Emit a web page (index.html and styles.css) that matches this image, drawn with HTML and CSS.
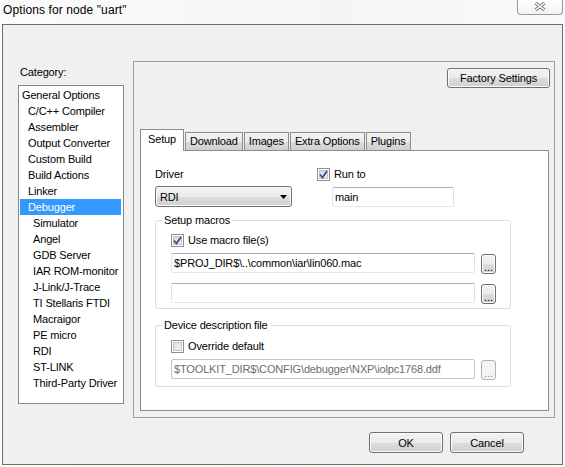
FILE: index.html
```html
<!DOCTYPE html>
<html lang="en">
<head>
  <meta charset="UTF-8" />
  <title>Options for node "uart"</title>
  <link rel="stylesheet" href="styles.css">
</head>
<body>
  <div id="titlebar">
    <span class="caption">Options for node "uart"</span>
    <button class="close-btn" title="Close">
      <svg width="12" height="9" viewBox="0 0 12 9">
        <path d="M1.5 1 L10.5 8 M10.5 1 L1.5 8" stroke="#7b7b7b" stroke-width="3.4" fill="none" />
        <path d="M1.5 1 L10.5 8 M10.5 1 L1.5 8" stroke="#ffffff" stroke-width="1.4" fill="none" />
      </svg>
    </button>
  </div>

  <div id="dialog">
    <div class="main">
      <div class="category">
        <div class="category-label">Category:</div>
        <ul class="category-list">
          <li>General Options</li>
          <li class="lvl1">C/C++ Compiler</li>
          <li class="lvl1">Assembler</li>
          <li class="lvl1">Output Converter</li>
          <li class="lvl1">Custom Build</li>
          <li class="lvl1">Build Actions</li>
          <li class="lvl1">Linker</li>
          <li class="lvl1 selected">Debugger</li>
          <li class="lvl2">Simulator</li>
          <li class="lvl2">Angel</li>
          <li class="lvl2">GDB Server</li>
          <li class="lvl2">IAR ROM-monitor</li>
          <li class="lvl2">J-Link/J-Trace</li>
          <li class="lvl2">TI Stellaris FTDI</li>
          <li class="lvl2">Macraigor</li>
          <li class="lvl2">PE micro</li>
          <li class="lvl2">RDI</li>
          <li class="lvl2">ST-LINK</li>
          <li class="lvl2">Third-Party Driver</li>
        </ul>
      </div>

      <div class="options-panel">
        <div class="panel-top">
          <button class="btn factory-btn">Factory Settings</button>
        </div>

        <div class="tabs">
          <div class="tab active">Setup</div>
          <div class="tab">Download</div>
          <div class="tab">Images</div>
          <div class="tab">Extra Options</div>
          <div class="tab">Plugins</div>
        </div>

        <div class="tab-page">
          <div class="driver-row">
            <div class="driver-col">
              <div class="field-label">Driver</div>
              <div class="combo">
                <span>RDI</span>
                <svg width="7" height="4" viewBox="0 0 7 4"><path d="M0 0 H7 L3.5 4 Z" fill="#000" /></svg>
              </div>
            </div>
            <div class="runto-col">
              <label class="check-row">
                <span class="checkbox checked">
                  <svg width="9" height="9" viewBox="0 0 9 9"><path d="M1 4.5 L3.5 7.5 L8 1" stroke="#3c4f8c" stroke-width="1.8" fill="none" /></svg>
                </span>
                Run to
              </label>
              <div class="textbox runto-box">main</div>
            </div>
          </div>

          <fieldset class="group macros">
            <legend>Setup macros</legend>
            <label class="check-row">
              <span class="checkbox checked">
                <svg width="9" height="9" viewBox="0 0 9 9"><path d="M1 4.5 L3.5 7.5 L8 1" stroke="#3c4f8c" stroke-width="1.8" fill="none" /></svg>
              </span>
              Use macro file(s)
            </label>
            <div class="path-row">
              <div class="textbox path-box">$PROJ_DIR$\..\common\iar\lin060.mac</div>
              <button class="btn browse-btn">...</button>
            </div>
            <div class="path-row second">
              <div class="textbox path-box"></div>
              <button class="btn browse-btn">...</button>
            </div>
          </fieldset>

          <fieldset class="group device">
            <legend>Device description file</legend>
            <label class="check-row">
              <span class="checkbox"></span>
              Override default
            </label>
            <div class="path-row">
              <div class="textbox path-box disabled">$TOOLKIT_DIR$\CONFIG\debugger\NXP\iolpc1768.ddf</div>
              <button class="btn browse-btn disabled">...</button>
            </div>
          </fieldset>
        </div>
      </div>
    </div>

    <div class="dialog-buttons">
      <button class="btn dlg-btn">OK</button>
      <button class="btn dlg-btn">Cancel</button>
    </div>
  </div>
</body>
</html>
```

FILE: styles.css
```css
body {
  margin: 0;
  width: 565px;
  height: 467px;
  overflow: hidden;
  background: linear-gradient(to right, #fbfbfb, #f4f5f6 60%, #fafafa);
  font-family: "Liberation Sans", Arial, sans-serif;
  font-size: 11px;
  letter-spacing: -0.15px;
  color: #000;
}

/* window caption */
#titlebar {
  height: 24px;
  display: flex;
  justify-content: space-between;
  align-items: flex-start;
}

.caption {
  padding-left: 3px;
  margin-top: 3px;
  font-size: 12px;
  line-height: 14px;
  letter-spacing: 0.1px;
}

.close-btn {
  width: 46px;
  height: 16px;
  margin: -1px 2px 0 0;
  padding: 0;
  border: 1px solid #9a9a9a;
  border-top: none;
  border-radius: 0 0 4px 4px;
  background: linear-gradient(#ffffff, #f2f2f2);
  display: flex;
  justify-content: center;
  align-items: center;
}

/* dialog body */
#dialog {
  margin: 0 2px;
  height: 441px;
  box-sizing: border-box;
  border: 1px solid #6e6e6e;
  background-color: #f0f0f0;
}

.main {
  display: flex;
  align-items: flex-start;
  padding-top: 36px;
}

.category {
  margin-left: 15px;
  width: 106px;
}

.category-label {
  margin-top: 5px;
  padding-left: 2px;
  line-height: 13px;
}

.category-list {
  margin: 6px 0 0 0;
  padding: 1px 0 0 0;
  height: 319px;
  box-sizing: border-box;
  list-style: none;
  border: 1px solid #828790;
  background-color: #fff;
}

.category-list li {
  height: 16px;
  line-height: 16px;
  margin: 0 2px 0 1px;
  padding-left: 2px;
  white-space: nowrap;
}

.category-list li.lvl1 {
  padding-left: 8px;
}

.category-list li.lvl2 {
  padding-left: 13px;
}

.category-list li.selected {
  background-color: #3399ff;
  color: #fff;
}

/* right side options frame */
.options-panel {
  margin-left: 9px;
  width: 422px;
  height: 357px;
  box-sizing: border-box;
  border: 1px solid #a0a0a0;
  padding: 0 5px 6px 6px;
  display: flex;
  flex-direction: column;
}

.panel-top {
  display: flex;
  justify-content: flex-end;
  padding-top: 6px;
}

.btn {
  font-family: inherit;
  font-size: 11px;
  letter-spacing: -0.15px;
  color: #000;
  padding: 0;
  border: 1px solid #707070;
  border-radius: 3px;
  background: linear-gradient(#f2f2f2 0%, #ebebeb 50%, #dddddd 51%, #cfcfcf 100%);
  box-shadow: inset 0 0 0 1px #fcfcfc;
}

.factory-btn {
  width: 103px;
  height: 20px;
  margin-right: -1px;
}

.tabs {
  display: flex;
  align-items: flex-end;
  height: 22px;
  margin-top: 41px;
  margin-bottom: -1px;
  position: relative;
  z-index: 1;
}

.tab {
  height: 18px;
  line-height: 17px;
  margin: 0 0 1px 1px;
  padding: 0 4px;
  box-sizing: border-box;
  border: 1px solid #898c95;
  border-bottom: none;
  background: linear-gradient(#f3f3f3 0%, #ebebeb 50%, #dddddd 51%, #cfcfcf 100%);
}

.tab.active {
  height: 22px;
  line-height: 19px;
  margin: 0;
  padding: 0 7px;
  background: #fff;
}

.tab-page {
  flex: 1;
  border: 1px solid #898c95;
  background-color: #fff;
  padding: 17px 0 0 14px;
}

/* driver / run to */
.driver-row {
  display: flex;
}

.driver-col {
  width: 137px;
}

.field-label {
  line-height: 13px;
  margin-bottom: 5px;
}

.combo {
  height: 21px;
  box-sizing: border-box;
  border: 1px solid #707070;
  border-radius: 3px;
  background: linear-gradient(#f2f2f2 0%, #ebebeb 50%, #dddddd 51%, #cfcfcf 100%);
  box-shadow: inset 0 0 0 1px #fcfcfc;
  display: flex;
  align-items: center;
  justify-content: space-between;
  padding: 0 4px 0 4px;
}

.runto-col {
  margin-left: 25px;
}

.check-row {
  display: flex;
  align-items: center;
  gap: 4px;
  height: 13px;
  line-height: 13px;
}

.checkbox {
  width: 13px;
  height: 13px;
  box-sizing: border-box;
  border: 1px solid #8e8f8f;
  background: linear-gradient(135deg, #dcdcdc, #f6f6f6);
  box-shadow: inset 0 0 0 1px #fff, inset 0 0 0 2px #c2c6cb;
  display: flex;
  justify-content: center;
  align-items: center;
}

.checkbox.checked {
  background: linear-gradient(135deg, #cdd3dd, #f4f5f8);
}

.textbox {
  height: 20px;
  box-sizing: border-box;
  border: 1px solid;
  border-color: #abadb3 #dbdfe6 #e3e9ef #e2e3ea;
  border-radius: 2px;
  background-color: #fff;
  padding-left: 2px;
  line-height: 18px;
  white-space: nowrap;
  overflow: hidden;
}

.runto-box {
  margin: 6px 0 0 15px;
  width: 122px;
}

/* group boxes */
.group {
  margin: 7px 0 0 0;
  width: 356px;
  box-sizing: border-box;
  min-width: 0;
  border: 1px solid #d5dfe5;
  border-radius: 3px;
  padding: 0 0 4px 15px;
}

.group legend {
  margin-left: -9px;
  padding: 0 2px;
  line-height: 13px;
}

.group .check-row {
  margin-top: 7px;
}

.path-row {
  display: flex;
  align-items: flex-start;
  margin-top: 6px;
}

.path-row.second {
  margin-top: 9px;
}

.path-box {
  width: 304px;
}

.browse-btn {
  width: 15px;
  height: 20px;
  margin: 1px 0 0 6px;
  line-height: 24px;
  letter-spacing: 0;
}

.group.device {
  margin-top: 10px;
  padding-bottom: 6px;
}

.group.device .check-row {
  margin-top: 8px;
}

.textbox.disabled {
  color: #6d6d6d;
  border-color: #c3c7cb;
}

.browse-btn.disabled {
  border-color: #adb2b5;
  background: #f4f4f4;
  box-shadow: none;
  color: #838383;
}

/* OK / Cancel */
.dialog-buttons {
  display: flex;
  justify-content: flex-end;
  gap: 7px;
  margin-top: 14px;
  padding-right: 38px;
}

.dlg-btn {
  width: 74px;
  height: 21px;
}
```
